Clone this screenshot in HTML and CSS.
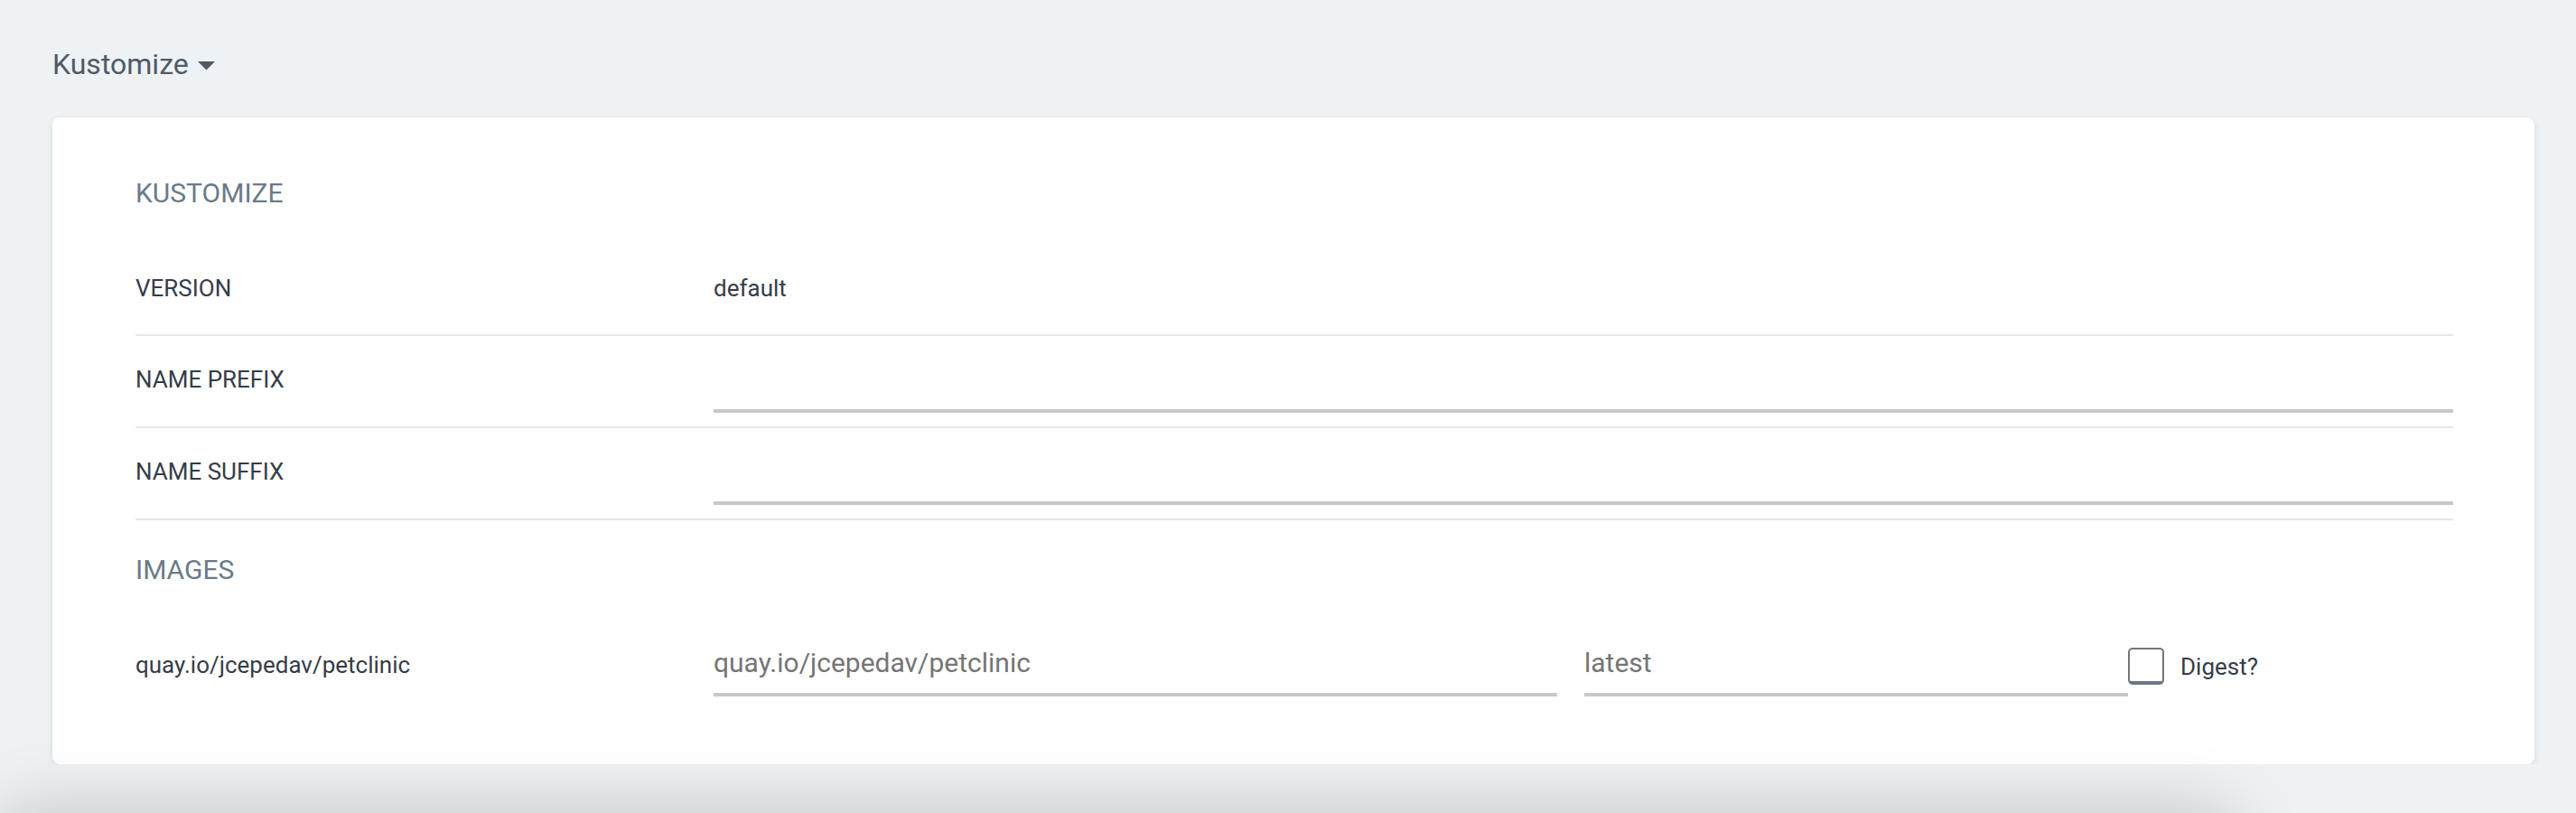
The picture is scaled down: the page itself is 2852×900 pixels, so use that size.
FILE: index.html
```html
<!DOCTYPE html>
<html lang="en">
<head>
<meta charset="utf-8">
<title>Kustomize</title>
<link rel="stylesheet" href="styles.css">
</head>
<body>
<div class="page">
  <div class="section-toggle">
    <span class="toggle-text">Kustomize</span>
    <svg class="caret" width="19" height="10" viewBox="0 0 19 10"><path d="M0 0 H19 L9.5 9.5 Z" fill="#4f5a65"/></svg>
  </div>
  <div class="card">
    <div class="group-title">KUSTOMIZE</div>
    <div class="row row-first">
      <div class="label">VERSION</div>
      <div class="value">default</div>
    </div>
    <div class="row">
      <div class="label">NAME PREFIX</div>
      <div class="value"><input class="field field-name" type="text"></div>
    </div>
    <div class="row">
      <div class="label">NAME SUFFIX</div>
      <div class="value"><input class="field field-name" type="text"></div>
    </div>
    <div class="group-title group-title-images">IMAGES</div>
    <div class="image-row">
      <div class="label image-label">quay.io/jcepedav/petclinic</div>
      <input class="field field-image field-repo" type="text" placeholder="quay.io/jcepedav/petclinic">
      <input class="field field-image field-tag" type="text" placeholder="latest">
      <label class="check-group">
        <span class="checkbox"></span>
        <span class="check-text">Digest?</span>
      </label>
    </div>
  </div>
</div>
<div class="bottom-bar"></div>
</body>
</html>
```
FILE: styles.css
```css
html, body {
  margin: 0;
  padding: 0;
  background: #eef2f5;
  font-family: Roboto, "Liberation Sans", Arial, sans-serif;
  overflow: hidden;
}

.page {
  padding: 51px 46px 0 58px;
}

.section-toggle {
  display: flex;
  align-items: center;
  height: 40px;
}

.toggle-text {
  font-size: 32px;
  line-height: 40px;
  color: #4f5a65;
}

.caret {
  margin-left: 10px;
  margin-top: 3px;
  display: block;
}

.card {
  margin-top: 39px;
  background: #ffffff;
  border-radius: 8px;
  box-shadow: 0 2px 6px rgba(40, 50, 60, 0.12);
  padding: 66px 90px 75px 92px;
}

.group-title {
  font-size: 30px;
  line-height: 36px;
  color: #6a7a89;
  margin-bottom: 39px;
}

.group-title-images {
  margin-top: 37px;
  margin-bottom: 0;
}

.row {
  display: flex;
  align-items: flex-start;
  min-height: 53px;
  padding: 32px 0 15px;
  border-bottom: 2px solid #e3e8ec;
}

.row-first {
  padding-bottom: 14px;
}

.label {
  width: 640px;
  flex: none;
  font-size: 26px;
  line-height: 32px;
  color: #363c48;
}

.value {
  flex: 1;
  font-size: 26px;
  line-height: 32px;
  color: #363c48;
}

.field {
  display: block;
  box-sizing: border-box;
  border: none;
  border-bottom: 4px solid #c8c8c8;
  border-radius: 0;
  background: transparent;
  outline: none;
  padding: 0;
  margin: 0;
  font-family: Roboto, "Liberation Sans", Arial, sans-serif;
  font-size: 30px;
  color: #333;
}

.field::placeholder {
  color: #757575;
  opacity: 1;
}

.field-name {
  width: 100%;
  height: 53px;
}

.image-row {
  display: flex;
  align-items: flex-start;
  padding-top: 63px;
}

.image-label {
  margin-top: 8px;
}

.field-image {
  height: 59px;
  padding-bottom: 12px;
}

.field-repo {
  width: 934px;
  margin-right: 30px;
}

.field-tag {
  width: 602px;
}

.check-group {
  display: flex;
  align-items: center;
  height: 41px;
  margin-top: 5px;
}

.checkbox {
  box-sizing: border-box;
  width: 40px;
  height: 41px;
  border: 2px solid #767676;
  border-bottom: 4px solid #6b7783;
  border-radius: 5px;
  background: #fff;
}

.check-text {
  margin-left: 18px;
  font-size: 26px;
  line-height: 32px;
  color: #363c48;
}

.bottom-bar {
  position: fixed;
  left: 0;
  top: 900px;
  width: 2470px;
  height: 120px;
  box-shadow: 0 0 80px rgba(0, 0, 0, 0.2);
}
```
